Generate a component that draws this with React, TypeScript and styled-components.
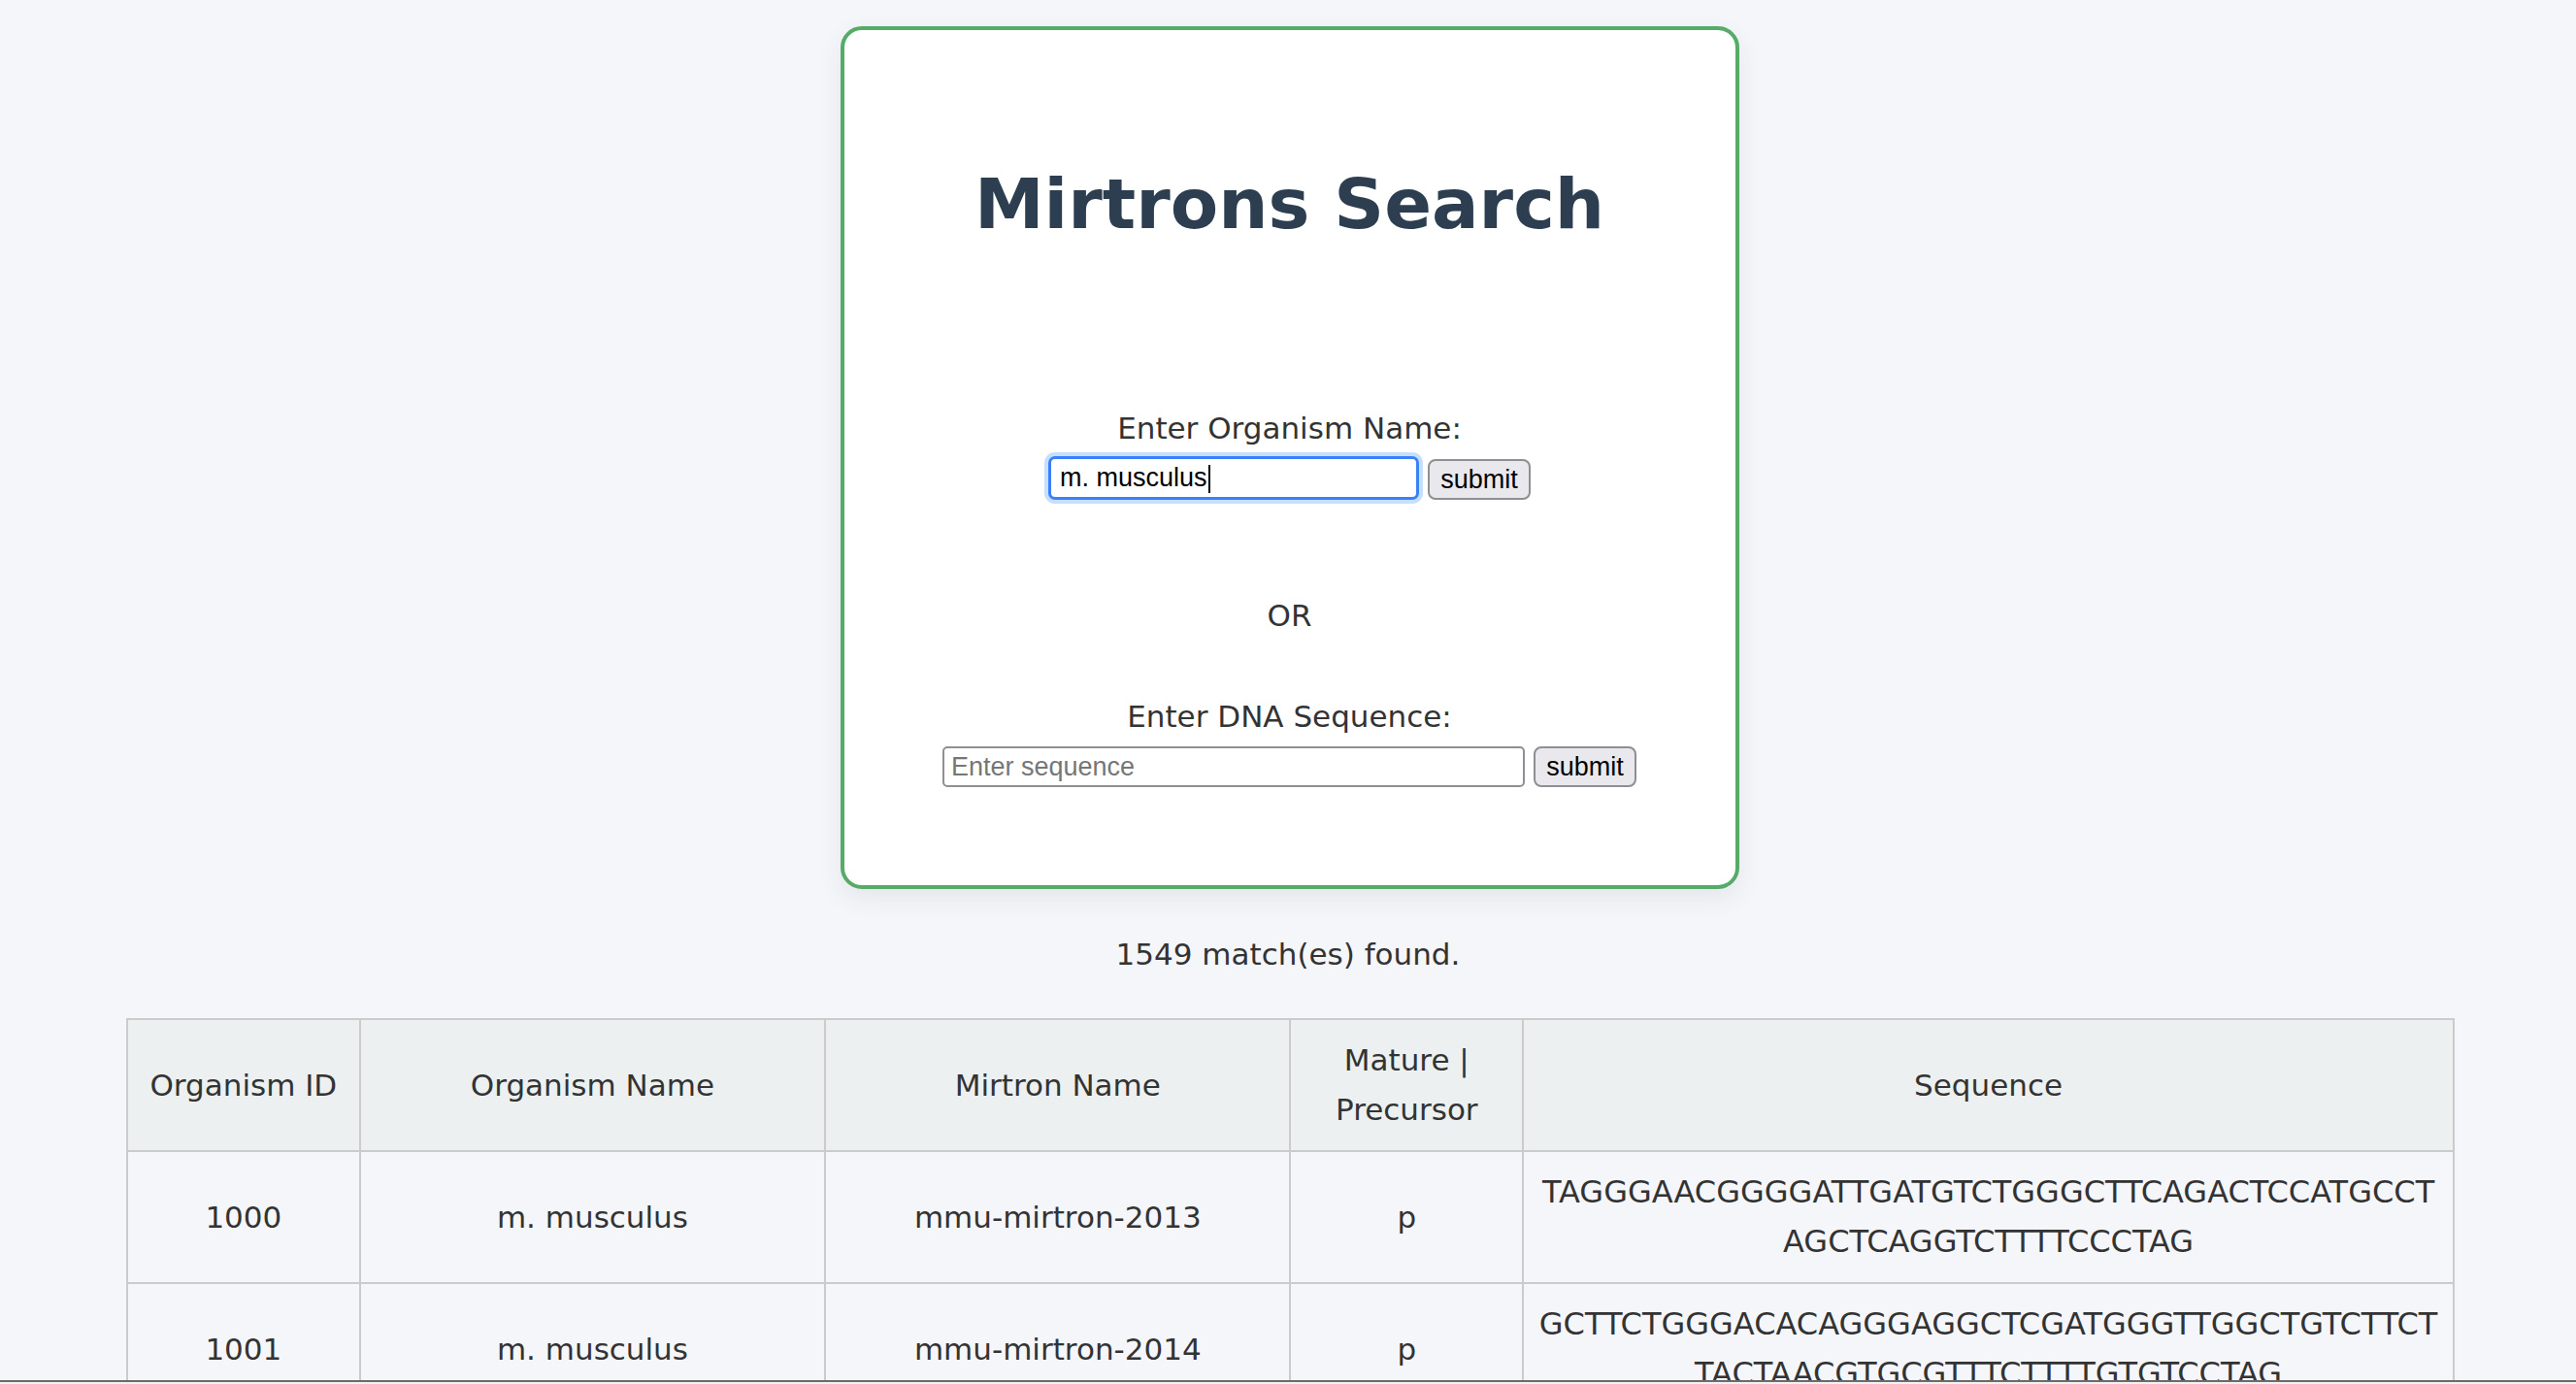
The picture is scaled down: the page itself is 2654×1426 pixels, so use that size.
import React from "react";
import styled, { createGlobalStyle } from "styled-components";

const GlobalStyle = createGlobalStyle`
  html, body {
    margin: 0;
    padding: 0;
    overflow: hidden;
  }
  body {
    background: #f5f6fa;
    color: #333333;
    font-family: "DejaVu Sans", "Liberation Sans", sans-serif;
  }
  * { box-sizing: border-box; }
`;

const Page = styled.div`
  display: flex;
  flex-direction: column;
  align-items: center;
  padding-top: 27px;
  min-height: 1426px;
`;

const Card = styled.section`
  width: 926px;
  margin-left: 3px;
  border: 4px solid #55ab67;
  border-radius: 22px;
  background: #ffffff;
  box-shadow: 0 10px 26px rgba(40, 50, 70, 0.08);
  padding: 131px 0 101px;
  display: flex;
  flex-direction: column;
  align-items: center;
`;

const Title = styled.h1`
  margin: 0;
  font-size: 72px;
  line-height: 96px;
  font-weight: 700;
  color: #2c3e50;
`;

const Label = styled.div<{ $gap: number }>`
  margin-top: ${(p) => p.$gap}px;
  font-size: 31px;
  line-height: 48px;
  color: #333333;
`;

const Or = styled.div`
  margin-top: 95px;
  font-size: 31px;
  line-height: 48px;
  color: #333333;
`;

const InputRow = styled.div<{ $gap: number }>`
  margin-top: ${(p) => p.$gap}px;
  display: flex;
  align-items: flex-end;
  gap: 9px;
`;

const InputWrap = styled.div`
  position: relative;
  display: flex;
`;

const Caret = styled.span`
  position: absolute;
  left: 165px;
  top: 9px;
  width: 2px;
  height: 29px;
  background: #000000;
`;

const TextInput = styled.input<{ $width: number; $focused?: boolean }>`
  width: ${(p) => p.$width}px;
  height: ${(p) => (p.$focused ? 45 : 42)}px;
  padding: 0 ${(p) => (p.$focused ? 9 : 7)}px;
  border: ${(p) => (p.$focused ? "3px solid #3a80f6" : "2px solid #8f8f94")};
  border-radius: ${(p) => (p.$focused ? 7 : 5)}px;
  box-shadow: ${(p) => (p.$focused ? "0 0 0 4px #c6dffc" : "none")};
  background: #ffffff;
  font-family: "Liberation Sans", Arial, sans-serif;
  font-size: 27px;
  color: #000000;
  outline: none;
  &::placeholder {
    color: #767676;
  }
`;

const SubmitButton = styled.button`
  width: 106px;
  height: 42px;
  padding: 0;
  border: 2px solid #8e8e93;
  border-radius: 8px;
  background: #e9e9ed;
  font-family: "Liberation Sans", Arial, sans-serif;
  font-size: 27px;
  color: #000000;
`;

const Matches = styled.p`
  margin: 43px 0 0;
  font-size: 31px;
  line-height: 48px;
  color: #333333;
`;

const Table = styled.table`
  margin: 42px 125px 0 130px;
  width: calc(100% - 255px);
  border-collapse: collapse;
  table-layout: fixed;
  border: 2px solid #cbcbcb;
`;

const HeadCell = styled.th`
  background: #ecf0f1;
  border: 2px solid #cbcbcb;
  padding: 16px;
  font-size: 31px;
  line-height: 51px;
  font-weight: 400;
  color: #333333;
  text-align: center;
  vertical-align: middle;
`;

const Cell = styled.td<{ $seq?: boolean }>`
  border: 2px solid #cbcbcb;
  padding: ${(p) => (p.$seq ? "16px 12px" : "16px")};
  font-size: ${(p) => (p.$seq ? 32 : 31)}px;
  line-height: 51px;
  color: #333333;
  text-align: center;
  vertical-align: middle;
  word-break: ${(p) => (p.$seq ? "break-all" : "normal")};
`;

const FooterBar = styled.div`
  position: fixed;
  left: 0;
  right: 0;
  top: 1422px;
  height: 60px;
  border-top: 2px solid #6b6b6b;
  background: #f2f2f2;
  padding: 0;
  font-family: "Liberation Sans", Arial, sans-serif;
  font-size: 26px;
  line-height: 24px;
  color: #000000;
`;

const columns = [
  { label: "Organism ID", width: "10%" },
  { label: "Organism Name", width: "20%" },
  { label: "Mirtron Name", width: "20%" },
  { label: "Mature | Precursor", width: "10%" },
  { label: "Sequence", width: "40%" },
];

const rows = [
  {
    id: "1000",
    organism: "m. musculus",
    mirtron: "mmu-mirtron-2013",
    type: "p",
    sequence: "TAGGGAACGGGGATTGATGTCTGGGCTTCAGACTCCATGCCTAGCTCAGGTCTTTTCCCTAG",
  },
  {
    id: "1001",
    organism: "m. musculus",
    mirtron: "mmu-mirtron-2014",
    type: "p",
    sequence: "GCTTCTGGGACACAGGGAGGCTCGATGGGTTGGCTGTCTTCTTACTAACGTGCGTTTCTTTTGTGTCCTAG",
  },
];

export default function App() {
  return (
    <>
      <GlobalStyle />
      <Page>
        <Card>
          <Title>Mirtrons Search</Title>
          <Label $gap={159}>Enter Organism Name:</Label>
          <InputRow $gap={5}>
            <InputWrap>
              <TextInput $width={382} $focused defaultValue="m. musculus" />
              <Caret />
            </InputWrap>
            <SubmitButton type="button">submit</SubmitButton>
          </InputRow>
          <Or>OR</Or>
          <Label $gap={56}>Enter DNA Sequence:</Label>
          <InputRow $gap={7}>
            <TextInput $width={600} placeholder="Enter sequence" />
            <SubmitButton type="button">submit</SubmitButton>
          </InputRow>
        </Card>
        <Matches>1549 match(es) found.</Matches>
        <Table>
          <colgroup>
            {columns.map((c) => (
              <col key={c.label} style={{ width: c.width }} />
            ))}
          </colgroup>
          <thead>
            <tr>
              {columns.map((c) => (
                <HeadCell key={c.label}>{c.label}</HeadCell>
              ))}
            </tr>
          </thead>
          <tbody>
            {rows.map((r) => (
              <tr key={r.id}>
                <Cell>{r.id}</Cell>
                <Cell>{r.organism}</Cell>
                <Cell>{r.mirtron}</Cell>
                <Cell>{r.type}</Cell>
                <Cell $seq>{r.sequence}</Cell>
              </tr>
            ))}
          </tbody>
        </Table>
      </Page>
      <FooterBar>Increase plan</FooterBar>
    </>
  );
}
